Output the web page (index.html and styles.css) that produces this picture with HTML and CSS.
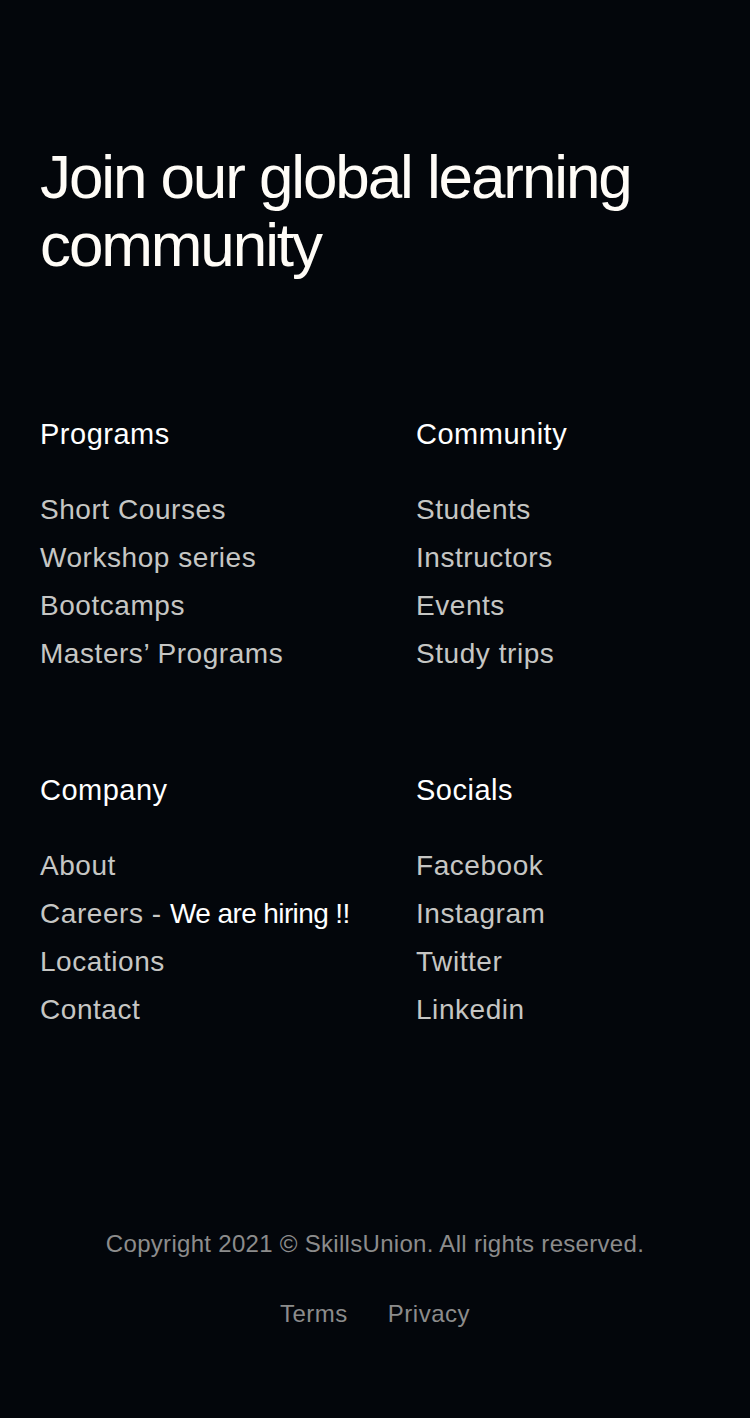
FILE: index.html
```html
<!DOCTYPE html>
<html lang="en">
<head>
    <meta charset="UTF-8">
    <title>SkillsUnion footer</title>
    <link rel="stylesheet" href="styles.css">
</head>
<body>

    <footer class="footer">
        <h2 class="footer-title">Join our global learning community</h2>

        <div class="footer-grid">
            <div class="footer-col">
                <h3>Programs</h3>
                <ul>
                    <li><a href="#">Short Courses</a></li>
                    <li><a href="#">Workshop series</a></li>
                    <li><a href="#">Bootcamps</a></li>
                    <li><a href="#">Masters’ Programs</a></li>
                </ul>
            </div>
            <div class="footer-col">
                <h3>Community</h3>
                <ul>
                    <li><a href="#">Students</a></li>
                    <li><a href="#">Instructors</a></li>
                    <li><a href="#">Events</a></li>
                    <li><a href="#">Study trips</a></li>
                </ul>
            </div>
            <div class="footer-col">
                <h3>Company</h3>
                <ul>
                    <li><a href="#">About</a></li>
                    <li><a href="#">Careers - <span class="hiring">We are hiring !!</span></a></li>
                    <li><a href="#">Locations</a></li>
                    <li><a href="#">Contact</a></li>
                </ul>
            </div>
            <div class="footer-col">
                <h3>Socials</h3>
                <ul>
                    <li><a href="#">Facebook</a></li>
                    <li><a href="#">Instagram</a></li>
                    <li><a href="#">Twitter</a></li>
                    <li><a href="#">Linkedin</a></li>
                </ul>
            </div>
        </div>

        <div class="footer-bottom">
            <p class="copyright">Copyright 2021 © SkillsUnion. All rights reserved.</p>
            <nav class="legal">
                <a href="#">Terms</a>
                <a href="#">Privacy</a>
            </nav>
        </div>
    </footer>

</body>
</html>
```

FILE: styles.css
```css
body {
    margin: 0;
    padding: 0;
    background: #03060b;
    font-family: 'Liberation Sans', Arial, sans-serif;
}

.footer {
    min-height: 1418px;
    box-sizing: border-box;
    padding: 143px 40px 0;
    background: #03060b;
}

.footer-title {
    margin: 0;
    color: #fffcf7;
    font-size: 62px;
    font-weight: normal;
    line-height: 68px;
    letter-spacing: -2.1px;
}

.footer-grid {
    display: grid;
    grid-template-columns: 376px 1fr;
    row-gap: 94px;
    margin-top: 137px;
}

.footer-col h3 {
    margin: 0;
    color: #ffffff;
    font-size: 29px;
    font-weight: normal;
    line-height: 36px;
    letter-spacing: 0.5px;
}

.footer-col ul {
    list-style: none;
    margin: 34px 0 0;
    padding: 0;
}

.footer-col li {
    line-height: 48px;
    font-size: 28px;
}

.footer-col a {
    color: #c6c6c4;
    text-decoration: none;
    letter-spacing: 0.55px;
}

.footer-col .hiring {
    color: #ffffff;
    letter-spacing: -0.6px;
}

.footer-bottom {
    margin-top: 194px;
    text-align: center;
}

.copyright {
    margin: 0;
    color: #8c8c8c;
    font-size: 24px;
    line-height: 32px;
    letter-spacing: 0.3px;
}

.legal {
    display: flex;
    justify-content: center;
    gap: 40px;
    margin-top: 38px;
}

.legal a {
    color: #8c8c8c;
    text-decoration: none;
    font-size: 24px;
    line-height: 32px;
    letter-spacing: 0.5px;
}
```
